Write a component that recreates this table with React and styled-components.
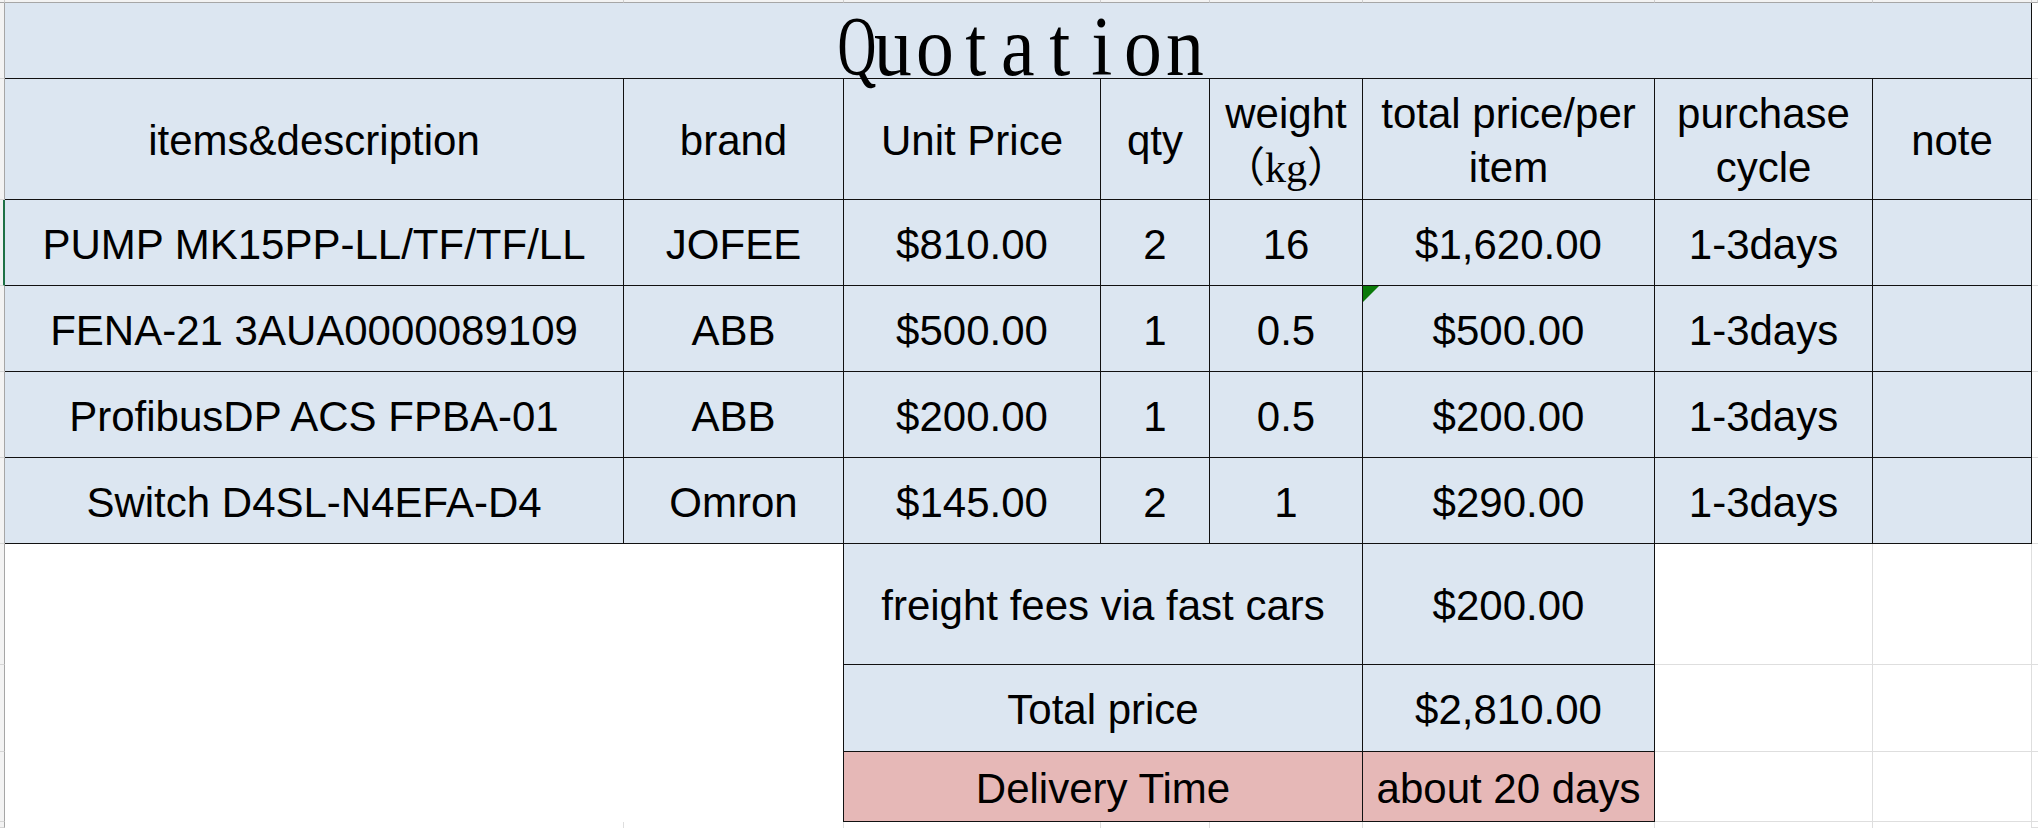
import React from "react";
import styled, { createGlobalStyle, css } from "styled-components";

const GlobalStyle = createGlobalStyle`
  html, body {
    margin: 0;
    padding: 0;
    background: #ffffff;
    overflow: hidden;
  }
  #root {
    width: 2038px;
    height: 828px;
  }
`;

const BLUE = "#dce6f1";
const PINK = "#e6b8b7";
const INK = "#111111";
const GRID = "#dedede";
const EDGE = "#a6a6a6";

const Sheet = styled.div`
  display: grid;
  grid-template-columns: 5px 619px 220px 257px 109px 153px 292px 218px 159px 1fr;
  grid-template-rows: 3px 76px 121px 86px 86px 86px 86px 121px 87px 70px 1fr;
  width: 2038px;
  height: 828px;
  background: #ffffff;
  font-family: "Liberation Sans", Arial, sans-serif;
  font-size: 42px;
  color: #000;
`;

const ColHead = styled.div`
  box-sizing: border-box;
  background: #f3f3f3;
  border-bottom: 1px solid ${EDGE};
  border-right: 1px solid #cfcfcf;
`;

const RowHead = styled.div`
  box-sizing: border-box;
  background: #f3f3f3;
  border-right: ${(p) => (p.$active ? "2px solid #1e7145" : `1px solid ${EDGE}`)};
  border-bottom: 1px solid #d6d6d6;
`;

const Title = styled.div`
  grid-column: 2 / span 8;
  box-sizing: border-box;
  display: flex;
  justify-content: center;
  align-items: flex-start;
  padding-top: 2px;
  background: ${BLUE};
  border-right: 1px solid ${INK};
  border-bottom: 1px solid ${INK};
  font-family: "Liberation Serif", "Times New Roman", serif;
  font-size: 84px;
  line-height: 84px;
  overflow: visible;
  position: relative;
  z-index: 1;
`;

const TitleGlyph = styled.span`
  display: inline-block;
  width: 41.7px;
  text-align: center;
  transform: scaleX(${(p) => p.$squeeze || 0.9});
`;

const Cell = styled.div`
  box-sizing: border-box;
  position: relative;
  display: flex;
  align-items: center;
  justify-content: center;
  text-align: center;
  padding-top: 4px;
  line-height: 54px;
  white-space: nowrap;
  background: ${(p) => (p.$tone === "pink" ? PINK : BLUE)};
  border-right: 1px solid ${INK};
  border-bottom: 1px solid ${INK};
  ${(p) =>
    p.$span &&
    css`
      grid-column: span ${p.$span};
    `}
`;

const CellText = styled.span`
  display: block;
`;

const Unit = styled.span`
  font-family: "Liberation Serif", "Noto Sans CJK SC", serif;
`;

const ErrorMark = styled.span`
  position: absolute;
  left: 0;
  top: 0;
  width: 0;
  height: 0;
  border-top: 16px solid #0a7a0a;
  border-right: 16px solid transparent;
`;

const Blank = styled.div`
  grid-column: span 2;
  grid-row: span 3;
  box-sizing: border-box;
  background: #ffffff;
  border-right: 1px solid ${INK};
`;

const Empty = styled.div`
  box-sizing: border-box;
  background: #ffffff;
  border-right: 1px solid ${GRID};
  border-bottom: ${(p) => (p.$open ? "none" : `1px solid ${GRID}`)};
`;

const Gutter = styled.div`
  box-sizing: border-box;
  background: #ffffff;
  border-bottom: 1px solid ${GRID};
`;

const items = [
  ["PUMP MK15PP-LL/TF/TF/LL", "JOFEE", "$810.00", "2", "16", "$1,620.00", "1-3days"],
  ["FENA-21 3AUA0000089109", "ABB", "$500.00", "1", "0.5", "$500.00", "1-3days"],
  ["ProfibusDP ACS FPBA-01", "ABB", "$200.00", "1", "0.5", "$200.00", "1-3days"],
  ["Switch D4SL-N4EFA-D4", "Omron", "$145.00", "2", "1", "$290.00", "1-3days"],
];

export default function App() {
  return (
    <>
      <GlobalStyle />
      <Sheet>
        {Array.from({ length: 10 }).map((_, i) => (
          <ColHead key={`ch${i}`} />
        ))}

        <RowHead />
        <Title>
          {"Quotation".split("").map((c, i) => (
            <TitleGlyph key={i} $squeeze={c === "Q" ? 0.64 : 0.9}>
              {c}
            </TitleGlyph>
          ))}
        </Title>
        <Gutter />

        <RowHead />
        <Cell>
          <CellText>items&amp;description</CellText>
        </Cell>
        <Cell>
          <CellText>brand</CellText>
        </Cell>
        <Cell>
          <CellText>Unit Price</CellText>
        </Cell>
        <Cell>
          <CellText>qty</CellText>
        </Cell>
        <Cell>
          <CellText>
            weight
            <br />
            <Unit>（kg）</Unit>
          </CellText>
        </Cell>
        <Cell>
          <CellText>
            total price/per
            <br />
            item
          </CellText>
        </Cell>
        <Cell>
          <CellText>
            purchase
            <br />
            cycle
          </CellText>
        </Cell>
        <Cell>
          <CellText>note</CellText>
        </Cell>
        <Gutter />

        {items.map((row, r) => (
          <React.Fragment key={r}>
            <RowHead $active={r === 0} />
            {row.map((v, c) => (
              <Cell key={c}>
                {r === 1 && c === 5 && <ErrorMark />}
                <CellText>{v}</CellText>
              </Cell>
            ))}
            <Cell />
            <Gutter />
          </React.Fragment>
        ))}

        <RowHead />
        <Blank />
        <Cell $span={3}>
          <CellText>freight fees via fast cars</CellText>
        </Cell>
        <Cell>
          <CellText>$200.00</CellText>
        </Cell>
        <Empty />
        <Empty />
        <Gutter />

        <RowHead />
        <Cell $span={3}>
          <CellText>Total price</CellText>
        </Cell>
        <Cell>
          <CellText>$2,810.00</CellText>
        </Cell>
        <Empty />
        <Empty />
        <Gutter />

        <RowHead />
        <Cell $span={3} $tone="pink">
          <CellText>Delivery Time</CellText>
        </Cell>
        <Cell $tone="pink">
          <CellText>about 20 days</CellText>
        </Cell>
        <Empty />
        <Empty />
        <Gutter />

        <RowHead />
        {Array.from({ length: 8 }).map((_, i) => (
          <Empty key={`e${i}`} $open />
        ))}
        <Gutter />
      </Sheet>
    </>
  );
}
